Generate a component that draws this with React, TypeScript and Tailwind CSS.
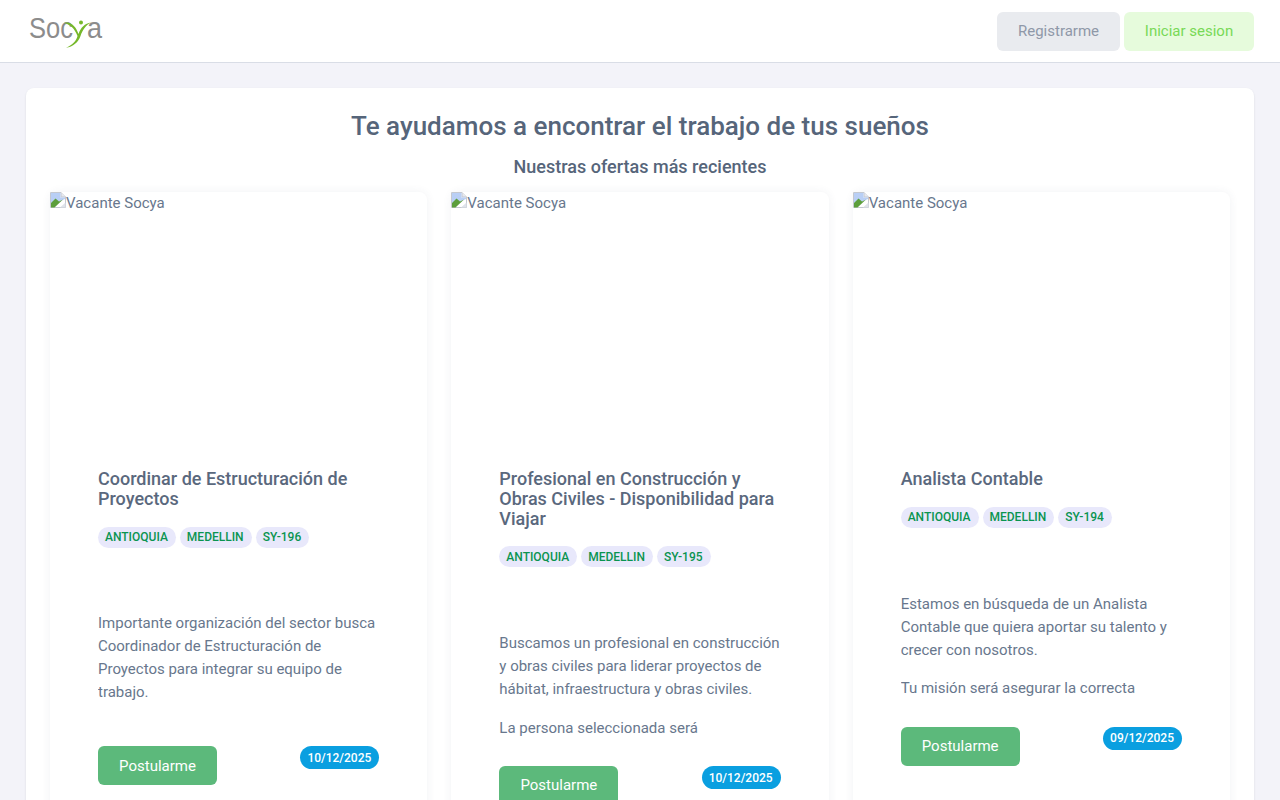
import React from "react";

type Job = { title: string; code: string; date: string; paras: string[] };

const jobs: Job[] = [
  {
    title: "Coordinar de Estructuración de Proyectos",
    code: "SY-196",
    date: "10/12/2025",
    paras: ["Importante organización del sector busca Coordinador de Estructuración de Proyectos para integrar su equipo de trabajo."],
  },
  {
    title: "Profesional en Construcción y Obras Civiles - Disponibilidad para Viajar",
    code: "SY-195",
    date: "10/12/2025",
    paras: [
      "Buscamos un profesional en construcción y obras civiles para liderar proyectos de hábitat, infraestructura y obras civiles.",
      "La persona seleccionada será",
    ],
  },
  {
    title: "Analista Contable",
    code: "SY-194",
    date: "09/12/2025",
    paras: [
      "Estamos en búsqueda de un Analista Contable que quiera aportar su talento y crecer con nosotros.",
      "Tu misión será asegurar la correcta",
    ],
  },
];

function BrokenImage() {
  return (
    <svg width="16" height="16" viewBox="0 0 16 16" className="shrink-0">
      <path d="M0.5 0.5H11L15.5 5V15.5H0.5Z" fill="#ffffff" stroke="#c4c8d0" />
      <path d="M11 0.5V5H15.5" fill="#e6e8ee" stroke="#c4c8d0" />
      <path d="M1 1H10.5V5.5H15V7L1 13Z" fill="#b9cff5" />
      <path d="M1 15.5V11L5.5 6.5L9 9.5L13 7.5L4.5 15.5Z" fill="#5c9e3c" />
      <path d="M10 15.5L15.5 10.5V15.5Z" fill="#dfe3ea" />
    </svg>
  );
}

function Logo() {
  return (
    <div className="relative flex items-start h-[34px] w-[76px] text-[#8c8c8c] text-[30px] leading-[28px] font-['Liberation_Sans',sans-serif]">
      <span className="block w-[58px] origin-left scale-x-85 whitespace-nowrap">Soc</span>
      <span className="block origin-left scale-x-90">a</span>
      <svg width="27" height="28" viewBox="0 0 27 28" className="absolute left-[35px] top-[6px]">
        <path d="M0 3C7 1 12 7 14.5 14C16.5 8 21 3 27 2.5C22 5 18.5 10 16.5 16C14.5 22 9 27 2 27.7C8 25 12.5 21 13.5 16C11 9 6 4 0 3Z" fill="#76b82a" />
        <circle cx="17" cy="2.5" r="2" fill="#76b82a" />
      </svg>
    </div>
  );
}

function Tag({ children }: { children: React.ReactNode }) {
  return (
    <span className="rounded-full bg-[#e8e8fb] pl-[7px] pr-[8px] h-[21px] flex items-center text-[12px] font-medium text-[#0a9450]">
      {children}
    </span>
  );
}

function JobCard({ job }: { job: Job }) {
  return (
    <article className="flex flex-col rounded-lg bg-white shadow-[0_0_10px_rgba(60,70,100,0.07)]">
      <div className="h-[250px] flex items-start text-[#68778d] text-[15px] leading-[22px]">
        <span className="flex items-start">
          <BrokenImage />
          <span>Vacante Socya</span>
        </span>
      </div>
      <div className="flex flex-col px-[48px] pt-[27px]">
        <h3 className="text-[18px] leading-[19.8px] font-medium text-[#5a687d]">{job.title}</h3>
        <div className="mt-[18px] flex gap-[4px]">
          <Tag>ANTIOQUIA</Tag>
          <Tag>MEDELLIN</Tag>
          <Tag>{job.code}</Tag>
        </div>
        <div className="mt-[64.8px] h-[107px] overflow-hidden text-[15px] leading-[23px] text-[#68778d]">
          {job.paras.map((p) => (
            <p key={p} className="mb-[15.5px]">
              {p}
            </p>
          ))}
        </div>
        <div className="mt-[27px] mb-[24px] flex items-start justify-between">
          <button className="h-[39px] w-[119px] rounded-md bg-[#5cb97b] text-white text-[15px]">Postularme</button>
          <span className="rounded-full bg-[#0a9fe0] text-white text-[12px] font-medium h-[23px] pl-[7px] pr-[8px] flex items-center">
            {job.date}
          </span>
        </div>
      </div>
    </article>
  );
}

export default function App() {
  return (
    <div className="h-[800px] overflow-hidden bg-[#f3f3f9] font-['Roboto',sans-serif]">
      <header className="h-[63px] bg-white border-b border-[#d9dde6] flex items-center justify-between pl-[29px] pr-[26px]">
        <Logo />
        <div className="flex items-center gap-[4px]">
          <button className="h-[39px] w-[123px] rounded-md bg-[#e9ebef] text-[#8f98a8] text-[15px]">Registrarme</button>
          <button className="h-[39px] w-[130px] rounded-md bg-[#e6fbdc] text-[#78d957] text-[15px]">Iniciar sesion</button>
        </div>
      </header>
      <main className="px-[26px] pt-[25px]">
        <section className="rounded-lg bg-white px-[24px] pt-[20px] shadow-[0_1px_2px_rgba(56,65,74,0.15)]">
          <h1 className="text-center text-[26px] leading-[36px] font-medium text-[#56657a]">
            Te ayudamos a encontrar el trabajo de tus sueños
          </h1>
          <h2 className="mt-[11px] text-center text-[18px] leading-[24px] font-medium text-[#56657a]">
            Nuestras ofertas más recientes
          </h2>
          <div className="mt-[13px] grid grid-cols-3 gap-[24px]">
            {jobs.map((j) => (
              <JobCard key={j.code} job={j} />
            ))}
          </div>
        </section>
      </main>
    </div>
  );
}
